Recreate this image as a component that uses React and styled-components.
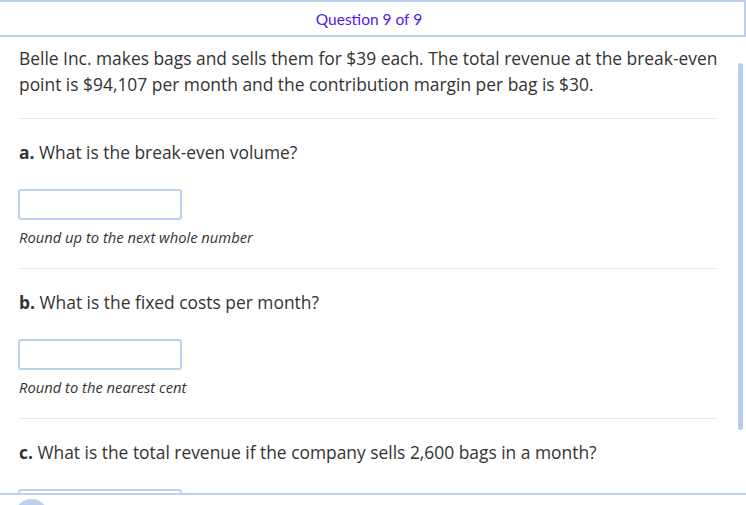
import React from "react";
import styled, { createGlobalStyle } from "styled-components";

const Global = createGlobalStyle`
  html, body { margin: 0; padding: 0; background: #fff; }
  body { font-family: "Open Sans", "DejaVu Sans", sans-serif; color: #333; }
  * { box-sizing: border-box; }
`;

const Frame = styled.div`
  width: 746px;
  height: 505px;
  display: flex;
  flex-direction: column;
  overflow: hidden;
`;

const Header = styled.header`
  height: 37px;
  flex: none;
  border-top: 2px solid #bccfee;
  border-bottom: 2px solid #bccfee;
  border-right: 2px solid #bccfee;
  display: flex;
  align-items: center;
  justify-content: center;
  font-family: Lato, "Liberation Sans", sans-serif;
  font-size: 15.5px;
  color: #5216f2;
  padding-right: 6px;
`;

const Main = styled.main`
  flex: 1;
  display: flex;
  overflow: hidden;
`;

const Content = styled.div`
  flex: 1;
  padding: 8px 21px 0 19px;
  overflow: hidden;
`;

const Intro = styled.p`
  margin: 0;
  font-size: 17.4px;
  line-height: 26px;
  white-space: nowrap;
  padding-bottom: 21px;
  border-bottom: 1px solid #e8e8e8;
`;

const Part = styled.section`
  padding-top: 20px;
  padding-bottom: 21px;
  border-bottom: 1px solid #e8e8e8;
`;

const Prompt = styled.div`
  font-size: 17.4px;
  line-height: 26px;
  b { font-weight: 700; }
`;

const Answer = styled.input`
  display: block;
  margin: 24px 0 0 -1px;
  width: 164px;
  height: 31px;
  border: 2px solid #bccfee;
  border-radius: 3px;
  background: #fff;
  outline: none;
`;

const Hint = styled.div`
  margin-top: 7px;
  font-size: 14.75px;
  line-height: 20px;
  font-style: italic;
`;

const Track = styled.div`
  width: 6px;
  flex: none;
  padding-top: 26px;
  margin-right: 2px;
`;

const Thumb = styled.div`
  width: 5px;
  height: 367px;
  border-radius: 3px;
  background: #b9cdee;
`;

const Footer = styled.footer`
  height: 12px;
  flex: none;
  border-top: 2px solid #bccfee;
  padding: 4px 0 0 15px;
  overflow: hidden;
`;

const Dot = styled.div`
  width: 33px;
  height: 33px;
  border-radius: 50%;
  background: #bccfee;
`;

const parts = [
  { l: "a.", q: "What is the break-even volume?", h: "Round up to the next whole number" },
  { l: "b.", q: "What is the fixed costs per month?", h: "Round to the nearest cent" },
  { l: "c.", q: "What is the total revenue if the company sells 2,600 bags in a month?", h: "" },
];

export default function App() {
  return (
    <>
      <Global />
      <Frame>
        <Header>Question 9 of 9</Header>
        <Main>
          <Content>
            <Intro>
              Belle Inc. makes bags and sells them for $39 each. The total revenue at the break-even
              <br />
              point is $94,107 per month and the contribution margin per bag is $30.
            </Intro>
            {parts.map((p) => (
              <Part key={p.l}>
                <Prompt>
                  <b>{p.l}</b> {p.q}
                </Prompt>
                <Answer type="text" />
                {p.h && <Hint>{p.h}</Hint>}
              </Part>
            ))}
          </Content>
          <Track>
            <Thumb />
          </Track>
        </Main>
        <Footer>
          <Dot />
        </Footer>
      </Frame>
    </>
  );
}
